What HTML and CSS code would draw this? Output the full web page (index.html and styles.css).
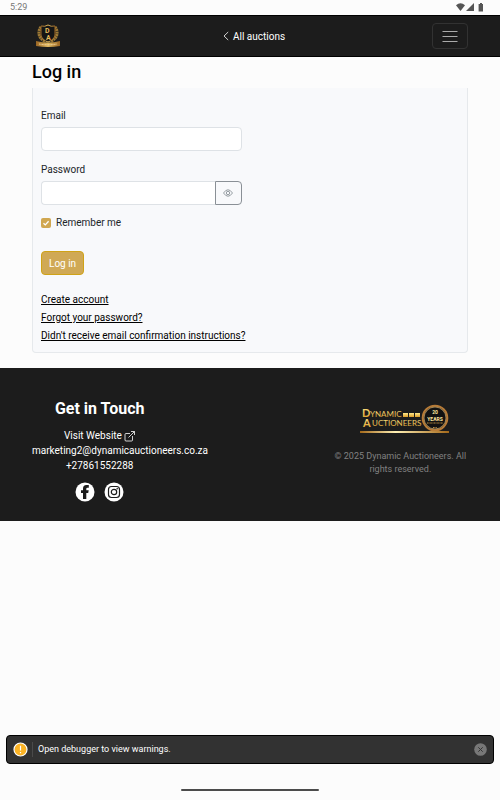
FILE: index.html
```html
<!DOCTYPE html>
<html lang="en">
<head>
  <meta charset="UTF-8">
  <meta name="viewport" content="width=device-width, initial-scale=1">
  <title>Log in</title>
  <link rel="stylesheet" href="styles.css">
</head>
<body>
  <div class="status-bar">
    <span>5:29</span>
    <svg class="status-icons" width="28" height="9" viewBox="0 0 28 9" fill="#555">
      <path d="M0 2.3Q4.5-1.8 9 2.3L4.5 8Z"/>
      <path d="M18 0V8H10Z"/>
      <path d="M24 0h2v1h1v7.4h-4.4V1H24Z"/>
    </svg>
  </div>

  <nav class="navbar">
    <a href="#" class="brand" aria-label="Dynamic Auctioneers">
      <svg width="26" height="24" viewBox="0 0 26 24">
        <defs>
          <linearGradient id="crest" x1="0" x2="1">
            <stop offset="0" stop-color="#9a6523"/>
            <stop offset=".5" stop-color="#e0b85e"/>
            <stop offset="1" stop-color="#9a6523"/>
          </linearGradient>
        </defs>
        <path d="M6 3C2 8 4 15 10 17M20 3C24 8 22 15 16 17" fill="none" stroke="#9d7935" stroke-width="3" stroke-dasharray="2 .5"/>
        <path d="M6 2Q10 3 13 1Q16 3 20 2V11Q19 16 13 18Q7 16 6 11Z" fill="#151515" stroke="url(#crest)"/>
        <text x="10" y="9" class="crest-letter">D</text>
        <text x="11" y="16" class="crest-letter">A</text>
        <path d="M1 17Q13 20 25 17V22Q13 24 1 22Z" fill="url(#crest)"/>
        <path d="M4 20Q13 21.5 22 20" fill="none" stroke="#f4d9aa" stroke-dasharray="1 .5"/>
      </svg>
    </a>
    <a href="#" class="nav-link">
      <svg width="6" height="10" viewBox="0 0 6 10" fill="none" stroke="#fff" stroke-width=".8"><path d="M5.2 1 1 5l4.2 4"/></svg>
      All auctions
    </a>
    <button type="button" class="menu-button" aria-label="Menu">
      <svg width="16" height="13" viewBox="0 0 16 13" stroke="#aaa"><path d="M.5 1.5h15M.5 6.5h15M.5 11.5h15"/></svg>
    </button>
  </nav>

  <main class="container">
    <h1>Log in</h1>
    <div class="card">
      <form>
        <div class="field">
          <label for="email">Email</label>
          <input type="email" id="email" class="form-control">
        </div>
        <div class="field">
          <label for="password">Password</label>
          <div class="input-group">
            <input type="password" id="password" class="form-control">
            <button type="button" class="eye-button" aria-label="Show password">
              <svg width="10" height="8" viewBox="0 0 10 8" fill="none" stroke="#6c757d" stroke-width=".7">
                <path d="M.5 4Q5-2.5 9.5 4Q5 10.5.5 4Z"/>
                <circle cx="5" cy="4" r="1.7"/>
              </svg>
            </button>
          </div>
        </div>
        <div class="check">
          <input type="checkbox" id="remember" checked>
          <label for="remember">Remember me</label>
        </div>
        <button type="submit" class="login-button">Log in</button>
      </form>
      <div class="links">
        <a href="#">Create account</a>
        <a href="#">Forgot your password?</a>
        <a href="#">Didn't receive email confirmation instructions?</a>
      </div>
    </div>
  </main>

  <footer>
    <div class="container footer-grid">
      <div class="contact">
        <h2>Get in Touch</h2>
        <a href="#">Visit Website
          <svg width="11" height="11" viewBox="0 0 11 11" fill="none" stroke="#fff" stroke-width=".8"><path d="M6 2.5H2Q1 2.5 1 3.5V9Q1 10 2 10H7.5Q8.5 10 8.5 9V5M7 .5H10.5V4M10.5.5 4.5 6.5"/></svg>
        </a>
        <a href="#">marketing2@dynamicauctioneers.co.za</a>
        <a href="#">+27861552288</a>
        <div class="social">
          <a href="#" aria-label="Facebook">
            <svg width="20" height="20" viewBox="0 0 20 20">
              <circle cx="10" cy="10" r="9.5" fill="#fff"/>
              <path d="M8 17V11H6V8.2H8V6.7Q8 3 11.4 3H13.8V5.8H12.3Q11.3 5.8 11.3 6.8V8.2H13.7L13.2 11H11.3V17Z" fill="#1c1c1c"/>
            </svg>
          </a>
          <a href="#" aria-label="Instagram">
            <svg width="20" height="20" viewBox="0 0 20 20">
              <circle cx="10" cy="10" r="9.5" fill="#fff"/>
              <g fill="none" stroke="#1c1c1c" stroke-width="1.2">
                <rect x="4.5" y="4.5" width="11" height="11" rx="3"/>
                <circle cx="10" cy="10" r="2.7"/>
              </g>
              <circle cx="13.2" cy="6.8" r=".8" fill="#1c1c1c"/>
            </svg>
          </a>
        </div>
      </div>
      <div class="copyright">
        <svg class="footer-logo" width="90" height="31" viewBox="0 0 90 31">
          <defs>
            <linearGradient id="gold" x1="0" y1="0" x2="0" y2="1">
              <stop offset="0" stop-color="#ffe98c"/>
              <stop offset="1" stop-color="#dc9d28"/>
            </linearGradient>
            <linearGradient id="line" x1="0" x2="1">
              <stop offset="0" stop-color="#a4691a"/>
              <stop offset=".4" stop-color="#fff0b4"/>
              <stop offset="1" stop-color="#a4691a"/>
            </linearGradient>
          </defs>
          <g fill="url(#gold)" class="logo-text">
            <text x="2" y="13" class="logo-cap">D</text>
            <text x="10" y="13">YNAMIC</text>
            <text x="3" y="23" class="logo-cap">A</text>
            <text x="12" y="22">UCTIONEERS</text>
            <path d="M43 9h5v4h-5zM49 9h5v4h-5zM55 9h5v4h-5z"/>
          </g>
          <rect x="0" y="27" width="89" height="2" fill="url(#line)"/>
          <circle cx="75" cy="14" r="12.3" fill="#111" stroke="#b77b37" stroke-width="2"/>
          <circle cx="75" cy="14" r="11" fill="none" stroke="#edc987" stroke-width=".6"/>
          <g text-anchor="middle" fill="#ffe6a0" class="badge-text">
            <text x="75" y="10">20</text>
            <text x="75" y="17">YEARS</text>
          </g>
          <path d="M67 19h16M73 23.5h4" stroke="#b68b42" stroke-width="1" stroke-dasharray="1 .4"/>
        </svg>
        <p>© 2025 Dynamic Auctioneers. All rights reserved.</p>
      </div>
    </div>
  </footer>

  <div class="toast">
    <svg width="15" height="15" viewBox="0 0 15 15">
      <circle cx="7.5" cy="7.5" r="6.5" fill="#fbb324" stroke="#fff" stroke-width="1.2"/>
      <path d="M7.5 3.8v4.7M7.5 10v1.3" stroke="#fff" stroke-width="1.2"/>
    </svg>
    <span class="toast-text">Open debugger to view warnings.</span>
    <button type="button" class="toast-close" aria-label="Close">
      <svg width="13" height="13" viewBox="0 0 13 13"><circle cx="6.5" cy="6.5" r="6.3" fill="#777"/><path d="M4.3 4.3l4.4 4.4M8.7 4.3 4.3 8.7" stroke="#333" stroke-width="1"/></svg>
    </button>
  </div>
  <div class="home-indicator"></div>
</body>
</html>
```

FILE: styles.css
```css
* {
  margin: 0;
  padding: 0;
  box-sizing: border-box;
}

body {
  font-family: Roboto, sans-serif;
  font-size: 10px;
  line-height: 15px;
  color: #212529;
  background-color: #fcfcfc;
  min-height: 100vh;
}

svg {
  display: block;
}

button,
input {
  font: inherit;
}

a {
  color: inherit;
}

.container {
  margin: 0 32px;
}

.status-bar {
  display: flex;
  justify-content: space-between;
  align-items: center;
  height: 15px;
  padding: 0 16px 0 10px;
  font-size: 9px;
  color: #777;
}

.navbar {
  display: flex;
  justify-content: space-between;
  align-items: center;
  height: 42px;
  padding: 0 32px 0 35px;
  background-color: #1c1c1c;
  border-top: 1px solid #000;
  border-bottom: 1px solid #000;
}

.brand {
  padding-right: 15px;
}

.crest-letter {
  font-size: 7px;
  font-weight: bold;
  fill: #e7bd5e;
}

.nav-link {
  display: flex;
  align-items: center;
  gap: 4px;
  color: #fff;
  text-decoration: none;
}

.menu-button {
  display: flex;
  align-items: center;
  justify-content: center;
  width: 36px;
  height: 26px;
  background: none;
  border: 1px solid #323232;
  border-radius: 4px;
}

h1 {
  margin-bottom: 2px;
  font-size: 18px;
  font-weight: 500;
  line-height: 29px;
  color: #000;
}

.card {
  padding: 20px 8px 7px;
  background-color: #f8f9fb;
  border: 1px solid #e6e9ec;
  border-top: 0;
  border-radius: 0 0 4px 4px;
}

.field {
  width: 48%;
  margin-bottom: 11px;
}

.field label {
  display: block;
  margin-bottom: 4px;
}

.form-control {
  display: block;
  width: 100%;
  height: 24px;
  padding: 0 8px;
  background-color: #fff;
  border: 1px solid #dee2e6;
  border-radius: 4px;
}

.input-group {
  display: flex;
}

.input-group .form-control {
  flex: 1;
  min-width: 0;
  border-right: 0;
  border-radius: 4px 0 0 4px;
}

.eye-button {
  display: flex;
  align-items: center;
  justify-content: center;
  width: 27px;
  background: none;
  border: 1px solid #8a9096;
  border-radius: 0 4px 4px 0;
}

.check {
  display: flex;
  align-items: center;
  gap: 5px;
  line-height: 13px;
}

.check input {
  appearance: none;
  width: 10px;
  height: 10px;
  border-radius: 2px;
  background: #d0a750 url("data:image/svg+xml,%3Csvg xmlns='http://www.w3.org/2000/svg' viewBox='0 0 10 10'%3E%3Cpath d='M2.5 5.2l1.8 1.7 3.3-3.6' fill='none' stroke='white' stroke-width='1.3'/%3E%3C/svg%3E");
}

.login-button {
  height: 24px;
  margin-top: 22px;
  padding: 0 7px;
  color: #fff;
  background-color: #d0a955;
  border: 1px solid #d0a317;
  border-radius: 4px;
}

.links {
  display: flex;
  flex-direction: column;
  align-items: flex-start;
  margin-top: 16px;
  line-height: 18px;
  color: #000;
}

footer {
  margin-top: 15px;
  padding: 31px 0 19px;
  color: #fff;
  background-color: #1c1c1c;
}

.footer-grid {
  display: grid;
  grid-template-columns: repeat(3, 1fr);
  gap: 15px;
}

.contact {
  min-width: 0;
  text-align: center;
}

.contact h2 {
  margin-bottom: 9px;
  font-size: 16px;
  font-weight: 700;
  line-height: 20px;
}

.contact a {
  display: block;
  text-decoration: none;
}

.contact a svg {
  display: inline-block;
  vertical-align: middle;
}

.contact .social {
  display: flex;
  justify-content: center;
  gap: 9px;
  margin-top: 9px;
}

.contact .social a svg {
  display: block;
}

.copyright {
  grid-column: 3;
  padding-top: 5px;
  text-align: center;
  font-size: 9px;
  line-height: 13px;
  color: #818181;
}

.footer-logo {
  margin: 0 18px 15px auto;
}

.logo-text {
  font-family: Lato, sans-serif;
  font-size: 8px;
  font-weight: 400;
}

.logo-cap {
  font-size: 11px;
  font-weight: 700;
}

.badge-text {
  font-size: 5px;
  font-weight: 700;
}

.toast {
  position: fixed;
  left: 6px;
  right: 6px;
  bottom: 36px;
  display: flex;
  align-items: center;
  height: 29px;
  padding: 0 6px;
  font-size: 9px;
  color: #fff;
  background-color: #323232;
  border: 1px solid #000;
  border-radius: 4px;
}

.toast-text {
  flex: 1;
  margin-left: 4px;
  padding-left: 5px;
  border-left: 1px solid #4a4a4a;
}

.toast-close {
  background: none;
  border: 0;
}

.home-indicator {
  position: fixed;
  left: 50%;
  bottom: 9px;
  width: 138px;
  height: 2px;
  margin-left: -69px;
  background-color: #4b4b4b;
  border-radius: 1px;
}
```
